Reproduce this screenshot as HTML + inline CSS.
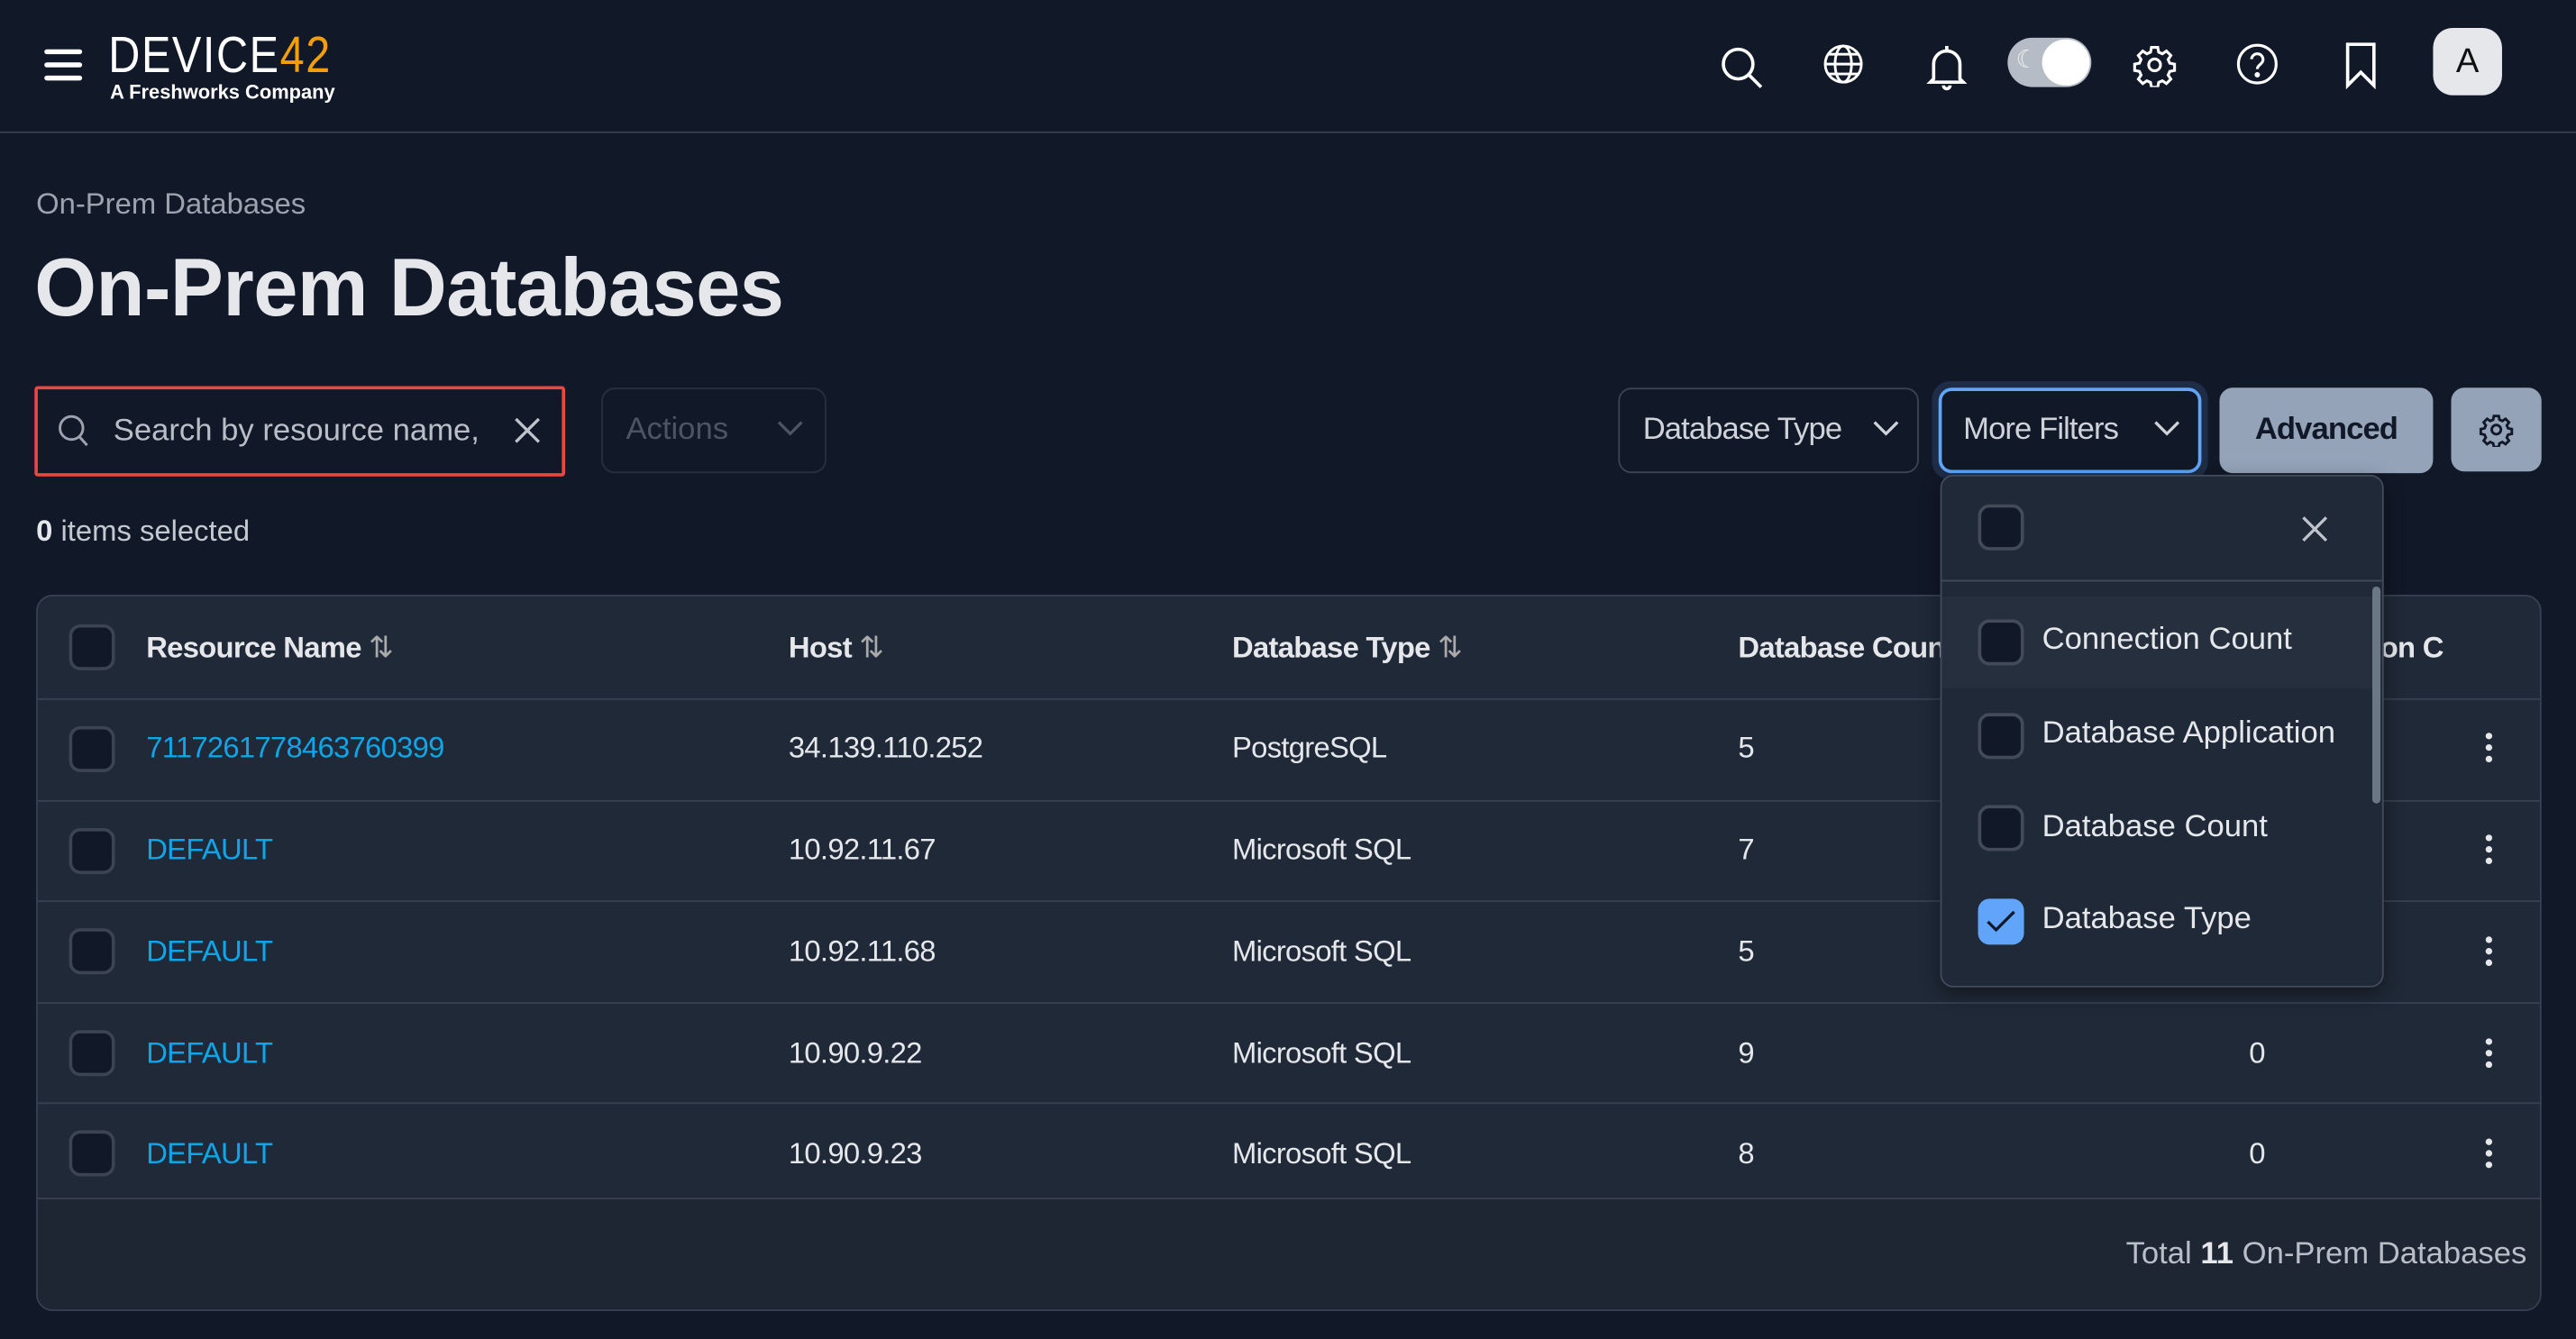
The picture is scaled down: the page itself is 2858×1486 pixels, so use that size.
<!DOCTYPE html>
<html><head><meta charset="utf-8"><style>
*{box-sizing:border-box;margin:0;padding:0}
html,body{width:2858px;height:1486px;overflow:hidden;background:#111827}
#w{position:absolute;left:0;top:0;width:1568px;height:815px;transform:scale(1.8227,1.8233);transform-origin:0 0;font-family:"Liberation Sans",sans-serif;color:#e5e7eb}
.a{position:absolute}
.t{white-space:nowrap}
.cb{position:absolute;width:28px;height:28px;border:2px solid #3b4452;border-radius:7px;background:#111827}
.row{position:absolute;left:0;width:1525px;border-top:1px solid #374151}
.cell{position:absolute;font-size:18px;letter-spacing:-0.4px;color:#e5e7eb}
.lnk{color:#0ea5e9}
.keb{position:absolute;left:1490px;width:4px}
.keb i{display:block;width:4px;height:4px;border-radius:2px;background:#e5e7eb;margin-bottom:3px}
svg{position:absolute}
</style></head><body><div id="w">
<!-- header -->
<div class="a" style="left:0;top:80px;width:1568px;height:1px;background:#374151"></div>
<div class="a" style="left:27px;top:30px;width:23px;height:3px;background:#fff;border-radius:2px"></div>
<div class="a" style="left:27px;top:38px;width:23px;height:3px;background:#fff;border-radius:2px"></div>
<div class="a" style="left:27px;top:46px;width:23px;height:3px;background:#fff;border-radius:2px"></div>
<div class="a t" style="left:66px;top:16px;font-size:31px;letter-spacing:1px;color:#fff;transform:scaleX(0.86);transform-origin:0 0">DEVICE<span style="color:#f59e0b">42</span></div>
<div class="a t" style="left:67px;top:49px;font-size:12px;font-weight:bold;color:#fff">A Freshworks Company</div>
<svg style="left:1046px;top:27px" width="28" height="28" viewBox="0 0 28 28" fill="none" stroke="#fff" stroke-width="2"><circle cx="12" cy="12" r="9"/><path d="M18.5 18.5L26 26"/></svg>
<svg style="left:1108px;top:25px" width="28" height="28" viewBox="0 0 28 28" fill="none" stroke="#fff" stroke-width="1.6"><circle cx="14" cy="14" r="11"/><ellipse cx="14" cy="14" rx="5" ry="11"/><path d="M3 14h22M5 8h18M5 20h18"/></svg>
<svg style="left:1172px;top:26px" width="26" height="30" viewBox="0 0 26 30" fill="none" stroke="#fff" stroke-width="2"><path d="M5 22V13a8 8 0 0116 0v9l2 2H3z"/><path d="M13 2v3M11 26a2 2 0 004 0"/></svg>
<div class="a" style="left:1222px;top:23px;width:51px;height:30px;border-radius:15px;background:#b6bcc6"></div>
<div class="a" style="left:1243px;top:24px;width:29px;height:28px;border-radius:14px;background:#fff"></div>
<div class="a t" style="left:1227px;top:27px;font-size:15px;color:#eee">☾</div>
<svg style="left:1298px;top:26px" width="27" height="27" viewBox="0 0 24 24" fill="none" stroke="#fff" stroke-width="1.5"><path d="M10.3 2.5h3.4l.5 2.6 2 .9 2.2-1.5 2.4 2.4-1.5 2.2.9 2 2.6.5v3.4l-2.6.5-.9 2 1.5 2.2-2.4 2.4-2.2-1.5-2 .9-.5 2.6h-3.4l-.5-2.6-2-.9-2.2 1.5-2.4-2.4 1.5-2.2-.9-2-2.6-.5v-3.4l2.6-.5.9-2-1.5-2.2 2.4-2.4 2.2 1.5 2-.9z"/><circle cx="12" cy="12" r="3.2"/></svg>
<svg style="left:1360px;top:25px" width="28" height="28" viewBox="0 0 28 28" fill="none" stroke="#fff" stroke-width="1.7"><circle cx="14" cy="14" r="11.5"/><path d="M10.5 11a3.5 3.5 0 117 .5c0 2.5-3.5 3-3.5 5.5"/><circle cx="14" cy="20.5" r=".8" fill="#fff"/></svg>
<svg style="left:1426px;top:25px" width="22" height="30" viewBox="0 0 22 30" fill="none" stroke="#fff" stroke-width="2"><path d="M3 2h16v25l-8-8-8 8z"/></svg>
<div class="a" style="left:1481px;top:17px;width:42px;height:41px;border-radius:12px;background:#e5e7eb;color:#111;font-size:21px;text-align:center;line-height:41px">A</div>
<!-- titles -->
<div class="a t" style="left:22px;top:114px;font-size:18px;color:#9ca3af">On-Prem Databases</div>
<div class="a t" style="left:21px;top:146px;font-size:50px;font-weight:bold;color:#e5e7eb;letter-spacing:-0.3px;transform:scaleX(0.97);transform-origin:0 0">On-Prem Databases</div>
<!-- toolbar -->
<div class="a" style="left:21px;top:235px;width:323px;height:55px;border:2px solid #ef4444;border-radius:2px"></div>
<svg style="left:35px;top:252px" width="20" height="22" viewBox="0 0 20 22" fill="none" stroke="#9ca3af" stroke-width="1.6"><circle cx="8.5" cy="8.5" r="7"/><path d="M13.5 14l4.5 5"/></svg>
<div class="a t" style="left:69px;top:252px;font-size:19px;color:#b9bec7">Search by resource name,</div>
<svg style="left:312px;top:253px" width="18" height="18" viewBox="0 0 18 18" stroke="#bfc4cc" stroke-width="1.8"><path d="M2 2l14 14M16 2L2 16"/></svg>
<div class="a" style="left:366px;top:236px;width:137px;height:52px;border:1px solid #283040;border-radius:8px"></div>
<div class="a t" style="left:381px;top:251px;font-size:19px;color:#4b5563">Actions</div>
<svg style="left:472px;top:255px" width="18" height="12" viewBox="0 0 18 12" fill="none" stroke="#4b5563" stroke-width="1.8"><path d="M2 2l7 7 7-7"/></svg>
<div class="a" style="left:985px;top:236px;width:183px;height:52px;border:1px solid #3b4452;border-radius:8px"></div>
<div class="a t" style="left:1000px;top:251px;font-size:19px;color:#cfd3d9;letter-spacing:-0.5px">Database Type</div>
<svg style="left:1139px;top:255px" width="18" height="12" viewBox="0 0 18 12" fill="none" stroke="#cfd3d9" stroke-width="1.8"><path d="M2 2l7 7 7-7"/></svg>
<div class="a" style="left:1176px;top:232px;width:168px;height:60px;border-radius:11px;background:#1e2d45"></div>
<div class="a" style="left:1180px;top:236px;width:160px;height:52px;border:2px solid #60a5fa;border-radius:8px;background:#111827"></div>
<div class="a t" style="left:1195px;top:251px;font-size:19px;color:#cfd3d9;letter-spacing:-0.5px">More Filters</div>
<svg style="left:1310px;top:255px" width="18" height="12" viewBox="0 0 18 12" fill="none" stroke="#cfd3d9" stroke-width="1.8"><path d="M2 2l7 7 7-7"/></svg>
<div class="a" style="left:1351px;top:236px;width:130px;height:52px;border-radius:8px;background:#94a3b8;color:#111827;font-size:19px;font-weight:bold;text-align:center;line-height:52px;letter-spacing:-0.5px">Advanced</div>
<div class="a" style="left:1492px;top:236px;width:55px;height:51px;border-radius:8px;background:#94a3b8"></div>
<svg style="left:1509px;top:251px" width="21" height="21" viewBox="0 0 24 24" fill="none" stroke="#111827" stroke-width="1.8"><path d="M10.3 2.5h3.4l.5 2.6 2 .9 2.2-1.5 2.4 2.4-1.5 2.2.9 2 2.6.5v3.4l-2.6.5-.9 2 1.5 2.2-2.4 2.4-2.2-1.5-2 .9-.5 2.6h-3.4l-.5-2.6-2-.9-2.2 1.5-2.4-2.4 1.5-2.2-.9-2-2.6-.5v-3.4l2.6-.5.9-2-1.5-2.2 2.4-2.4 2.2 1.5 2-.9z"/><circle cx="12" cy="12" r="3.2"/></svg>
<div class="a t" style="left:22px;top:313px;font-size:18px;color:#c4c8cf"><b style="color:#e5e7eb">0</b> items selected</div>
<!-- table -->
<div class="a" style="left:22px;top:362px;width:1525px;height:436px;background:#1f2937;border:1px solid #374151;border-radius:10px;overflow:hidden">
 <div class="cb" style="left:19px;top:17px"></div>
 <div class="cell t" style="left:66px;top:21px;font-weight:bold">Resource Name <span style="font-weight:normal;color:#aaa">⇅</span></div>
 <div class="cell t" style="left:457px;top:21px;font-weight:bold">Host <span style="font-weight:normal;color:#aaa">⇅</span></div>
 <div class="cell t" style="left:727px;top:21px;font-weight:bold">Database Type <span style="font-weight:normal;color:#aaa">⇅</span></div>
 <div class="cell t" style="left:1035px;top:21px;font-weight:bold">Database Count</div>
 <div class="cell t" style="left:1352px;top:21px;font-weight:bold">Connection C</div>

 <div class="row" style="top:62px;height:62px"><div class="cb" style="left:19px;top:16px"></div><div class="cell lnk t" style="left:66px;top:19px">7117261778463760399</div><div class="cell t" style="left:457px;top:19px">34.139.110.252</div><div class="cell t" style="left:727px;top:19px">PostgreSQL</div><div class="cell t" style="left:1035px;top:19px">5</div><div class="keb" style="top:20px"><i></i><i></i><i></i></div></div>
 <div class="row" style="top:124px;height:62px"><div class="cb" style="left:19px;top:16px"></div><div class="cell lnk t" style="left:66px;top:19px">DEFAULT</div><div class="cell t" style="left:457px;top:19px">10.92.11.67</div><div class="cell t" style="left:727px;top:19px">Microsoft SQL</div><div class="cell t" style="left:1035px;top:19px">7</div><div class="keb" style="top:20px"><i></i><i></i><i></i></div></div>
 <div class="row" style="top:185px;height:62px"><div class="cb" style="left:19px;top:16px"></div><div class="cell lnk t" style="left:66px;top:20px">DEFAULT</div><div class="cell t" style="left:457px;top:20px">10.92.11.68</div><div class="cell t" style="left:727px;top:20px">Microsoft SQL</div><div class="cell t" style="left:1035px;top:20px">5</div><div class="keb" style="top:21px"><i></i><i></i><i></i></div></div>
 <div class="row" style="top:247px;height:62px"><div class="cb" style="left:19px;top:16px"></div><div class="cell lnk t" style="left:66px;top:20px">DEFAULT</div><div class="cell t" style="left:457px;top:20px">10.90.9.22</div><div class="cell t" style="left:727px;top:20px">Microsoft SQL</div><div class="cell t" style="left:1035px;top:20px">9</div><div class="cell t" style="left:1346px;top:20px">0</div><div class="keb" style="top:21px"><i></i><i></i><i></i></div></div>
 <div class="row" style="top:308px;height:59px"><div class="cb" style="left:19px;top:16px"></div><div class="cell lnk t" style="left:66px;top:20px">DEFAULT</div><div class="cell t" style="left:457px;top:20px">10.90.9.23</div><div class="cell t" style="left:727px;top:20px">Microsoft SQL</div><div class="cell t" style="left:1035px;top:20px">8</div><div class="cell t" style="left:1346px;top:20px">0</div><div class="keb" style="top:21px"><i></i><i></i><i></i></div></div>
 <div class="row" style="top:366px;height:70px;background:#1e2533"></div>
 <div class="cell t" style="right:8px;top:390px;font-size:19px;letter-spacing:0;color:#b9bec7">Total <b style="color:#e5e7eb">11</b> On-Prem Databases</div>
</div>
<!-- dropdown -->
<div class="a" style="left:1181px;top:289px;width:270px;height:312px;background:#1f2937;border:1px solid #414b5a;border-radius:8px;box-shadow:0 4px 12px rgba(0,0,0,.4);overflow:hidden">
 <div class="cb" style="left:22px;top:17px;border-color:#424b58"></div>
 <svg style="left:218px;top:23px" width="18" height="18" viewBox="0 0 18 18" stroke="#bfc4cc" stroke-width="1.8"><path d="M2 2l14 14M16 2L2 16"/></svg>
 <div class="a" style="left:0;top:63px;width:270px;height:1px;background:#414b5a"></div>
 <div class="a" style="left:0;top:73px;width:262px;height:56px;background:#252f3d"></div>
 <div class="a" style="left:262px;top:67px;width:5px;height:132px;border-radius:3px;background:#6b7785"></div>
 <div class="cb" style="left:22px;top:87px;border-color:#424b58"></div><div class="a t" style="left:61px;top:89px;font-size:19px;color:#e5e7eb">Connection Count</div>
 <div class="cb" style="left:22px;top:144px;border-color:#424b58"></div><div class="a t" style="left:61px;top:146px;font-size:19px;color:#e5e7eb">Database Application</div>
 <div class="cb" style="left:22px;top:200px;border-color:#424b58"></div><div class="a t" style="left:61px;top:203px;font-size:19px;color:#e5e7eb">Database Count</div>
 <div class="cb" style="left:22px;top:257px;border:none;background:#60a5fa"></div>
 <svg style="left:25px;top:262px" width="22" height="18" viewBox="0 0 22 18" fill="none" stroke="#111827" stroke-width="1.8"><path d="M3 9l5 5 11-11"/></svg>
 <div class="a t" style="left:61px;top:259px;font-size:19px;color:#e5e7eb">Database Type</div>
</div>
</div></body></html>
